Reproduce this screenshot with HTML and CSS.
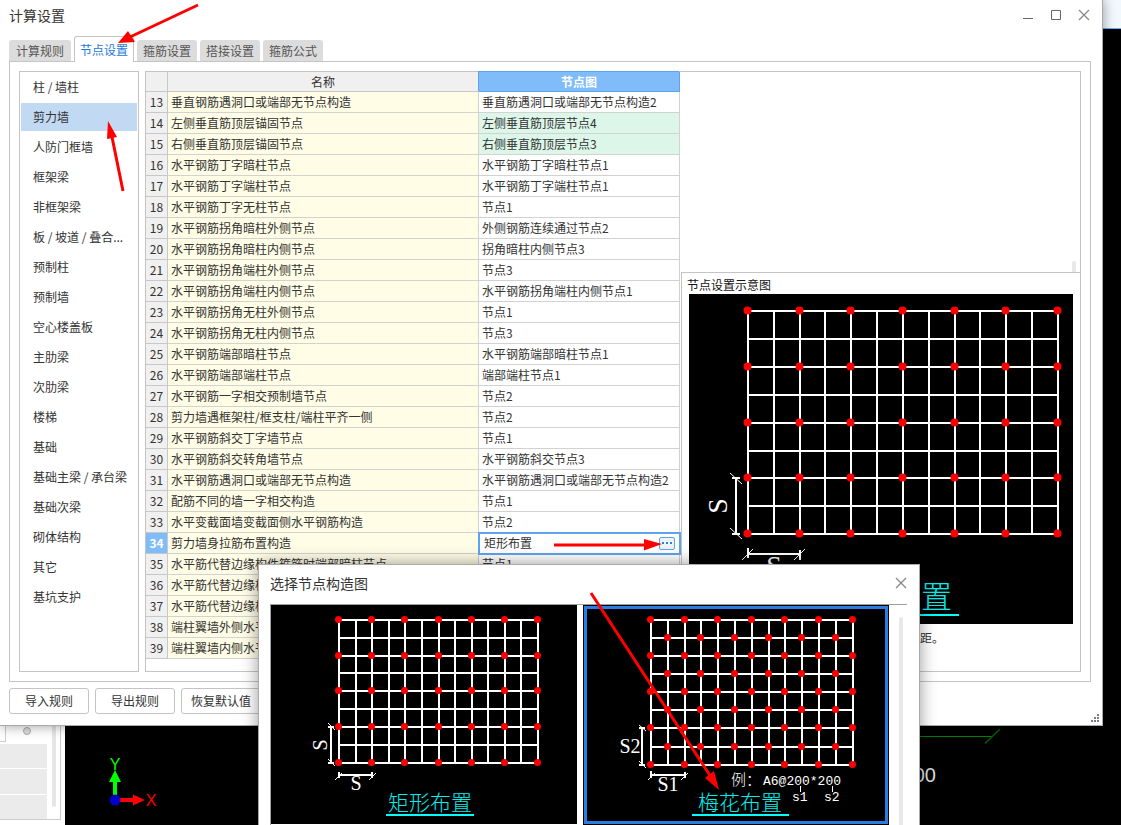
FILE: index.html
```html
<!DOCTYPE html>
<html lang="zh-CN">
<head>
<meta charset="utf-8">
<title>计算设置</title>
<link rel="stylesheet" href="styles.css">
</head>
<body>
<div class="desktop">
  <div class="ribbon"></div>
  <svg class="cad" viewBox="0 0 1121 825" width="1121" height="825" aria-hidden="true">
    <path d="M880 736.5H992" stroke="#008000" fill="none"/>
    <path d="M985 743.500L1000 729" stroke="#006000" stroke-width="1.500" fill="none"/>
    <text x="936" y="782" class="cad-dim">2000</text>
    <path d="M115 796V781" stroke="#0f0" stroke-width="4"/>
    <path d="M115 770L121 782H109Z" fill="#0f0"/>
    <path d="M119 800H134" stroke="#f00" stroke-width="4"/>
    <path d="M145 800L133 794.500V805.500Z" fill="#f00"/>
    <circle cx="115" cy="800" r="5.500" fill="#0000c8"/>
    <text x="115" y="770" class="axis axis-y">Y</text>
    <text x="151" y="806" class="axis axis-x">X</text>
  </svg>
  <div class="dock">
    <div class="dock-frame">
      <div class="dock-rows">
        <div class="dock-head"><span class="dock-box"></span><span class="dock-dot"></span></div>
        <div class="dock-row"></div><div class="dock-row"></div><div class="dock-row"></div>
      </div>
      <div class="dock-scroll"></div>
    </div>
  </div>

  <main class="window">
    <header class="titlebar">
      <h1 class="title">计算设置</h1>
      <div class="controls">
        <button class="control" type="button" aria-label="最小化"><svg width="12" height="12" viewBox="0 0 12 12"><path d="M1 9.500H11" stroke="#666"/></svg></button>
        <button class="control" type="button" aria-label="最大化"><svg width="12" height="12" viewBox="0 0 12 12"><path d="M1.500 1.500H10.500V10.500H1.500Z" stroke="#666" fill="none"/></svg></button>
        <button class="control" type="button" aria-label="关闭"><svg width="12" height="12" viewBox="0 0 12 12"><path d="M1 1L11 11M11 1L1 11" stroke="#888" stroke-width="1.300"/></svg></button>
      </div>
    </header>
    <nav class="tabs" role="tablist">
      <button class="tab" type="button" role="tab">计算规则</button>
      <button class="tab active" type="button" role="tab" aria-selected="true">节点设置</button>
      <button class="tab" type="button" role="tab">箍筋设置</button>
      <button class="tab" type="button" role="tab">搭接设置</button>
      <button class="tab" type="button" role="tab">箍筋公式</button>
    </nav>
    <section class="panel">
      <div class="sidebar">
        <button class="side-item" type="button">柱 / 墙柱</button>
        <button class="side-item selected" type="button">剪力墙</button>
        <button class="side-item" type="button">人防门框墙</button>
        <button class="side-item" type="button">框架梁</button>
        <button class="side-item" type="button">非框架梁</button>
        <button class="side-item" type="button">板 / 坡道 / 叠合...</button>
        <button class="side-item" type="button">预制柱</button>
        <button class="side-item" type="button">预制墙</button>
        <button class="side-item" type="button">空心楼盖板</button>
        <button class="side-item" type="button">主肋梁</button>
        <button class="side-item" type="button">次肋梁</button>
        <button class="side-item" type="button">楼梯</button>
        <button class="side-item" type="button">基础</button>
        <button class="side-item" type="button">基础主梁 / 承台梁</button>
        <button class="side-item" type="button">基础次梁</button>
        <button class="side-item" type="button">砌体结构</button>
        <button class="side-item" type="button">其它</button>
        <button class="side-item" type="button">基坑支护</button>
      </div>
      <div class="content">
        <table class="grid">
          <colgroup><col class="col-num"><col class="col-name"><col class="col-node"></colgroup>
          <thead><tr><th></th><th>名称</th><th class="current">节点图</th></tr></thead>
          <tbody>
            <tr><th>13</th><td>垂直钢筋遇洞口或端部无节点构造</td><td>垂直筋遇洞口或端部无节点构造2</td></tr>
            <tr class="changed"><th>14</th><td>左侧垂直筋顶层锚固节点</td><td>左侧垂直筋顶层节点4</td></tr>
            <tr class="changed"><th>15</th><td>右侧垂直筋顶层锚固节点</td><td>右侧垂直筋顶层节点3</td></tr>
            <tr><th>16</th><td>水平钢筋丁字暗柱节点</td><td>水平钢筋丁字暗柱节点1</td></tr>
            <tr><th>17</th><td>水平钢筋丁字端柱节点</td><td>水平钢筋丁字端柱节点1</td></tr>
            <tr><th>18</th><td>水平钢筋丁字无柱节点</td><td>节点1</td></tr>
            <tr><th>19</th><td>水平钢筋拐角暗柱外侧节点</td><td>外侧钢筋连续通过节点2</td></tr>
            <tr><th>20</th><td>水平钢筋拐角暗柱内侧节点</td><td>拐角暗柱内侧节点3</td></tr>
            <tr><th>21</th><td>水平钢筋拐角端柱外侧节点</td><td>节点3</td></tr>
            <tr><th>22</th><td>水平钢筋拐角端柱内侧节点</td><td>水平钢筋拐角端柱内侧节点1</td></tr>
            <tr><th>23</th><td>水平钢筋拐角无柱外侧节点</td><td>节点1</td></tr>
            <tr><th>24</th><td>水平钢筋拐角无柱内侧节点</td><td>节点3</td></tr>
            <tr><th>25</th><td>水平钢筋端部暗柱节点</td><td>水平钢筋端部暗柱节点1</td></tr>
            <tr><th>26</th><td>水平钢筋端部端柱节点</td><td>端部端柱节点1</td></tr>
            <tr><th>27</th><td>水平钢筋一字相交预制墙节点</td><td>节点2</td></tr>
            <tr><th>28</th><td>剪力墙遇框架柱/框支柱/端柱平齐一侧</td><td>节点2</td></tr>
            <tr><th>29</th><td>水平钢筋斜交丁字墙节点</td><td>节点1</td></tr>
            <tr><th>30</th><td>水平钢筋斜交转角墙节点</td><td>水平钢筋斜交节点3</td></tr>
            <tr><th>31</th><td>水平钢筋遇洞口或端部无节点构造</td><td>水平钢筋遇洞口或端部无节点构造2</td></tr>
            <tr><th>32</th><td>配筋不同的墙一字相交构造</td><td>节点1</td></tr>
            <tr><th>33</th><td>水平变截面墙变截面侧水平钢筋构造</td><td>节点2</td></tr>
            <tr class="editing"><th>34</th><td>剪力墙身拉筋布置构造</td><td><div class="editor"><input class="edit-input" type="text" value="矩形布置" aria-label="剪力墙身拉筋布置构造"><button class="more" type="button" aria-label="选择"><svg width="12" height="4" viewBox="0 0 12 4"><path d="M1 1h2v2h-2zM5 1h2v2h-2zM9 1h2v2h-2z" fill="#2f80de"/></svg></button></div></td></tr>
            <tr><th>35</th><td>水平筋代替边缘构件箍筋时端部暗柱节点</td><td>节点1</td></tr>
            <tr><th>36</th><td>水平筋代替边缘构件</td><td></td></tr>
            <tr><th>37</th><td>水平筋代替边缘构件</td><td></td></tr>
            <tr><th>38</th><td>端柱翼墙外侧水平</td><td></td></tr>
            <tr><th>39</th><td>端柱翼墙内侧水平</td><td></td></tr>
          </tbody>
        </table>
        <div class="detail">
          <div class="detail-top"><span class="thumb"></span></div>
          <div class="preview">
            <h2 class="preview-title">节点设置示意图</h2>
            <svg class="drawing" viewBox="689 294 384 330" width="384" height="330" role="img" aria-label="矩形布置">
              <path class="wire" d="M748 310V535M774 311V534M800 311V534M825 311V534M851 311V534M877 311V534M903 311V534M929 311V534M955 311V534M980 311V534M1006 311V534M1032 311V534M1058 310V535M748 311H1058M748 339H1058M748 367H1058M748 395H1058M748 423H1058M748 451H1058M748 478H1058M748 506H1058M748 534H1058"/>
              <defs><path id="row-a" d="M747.500 0h0M799.500 0h0M850.500 0h0M902.500 0h0M954.500 0h0M1005.500 0h0M1057.500 0h0"/></defs>
              <g class="dots dots-big"><use href="#row-a" y="310.500"/><use href="#row-a" y="366.500"/><use href="#row-a" y="422.500"/><use href="#row-a" y="477.500"/><use href="#row-a" y="533.500"/></g>
              <path class="wire" d="M736 478V534M732 478H740M732 534H740M748 554H800M748 548V558M800 550V560"/>
              <path class="tick" d="M730 473L742 484M730 528L742 539M742 560L753 549M794 560L805 549"/>
              <text class="dim dim-big" transform="translate(727 506) rotate(-90)">S</text>
              <text class="dim dim-big" x="774" y="575">S</text>
              <text class="name name-big" x="890" y="608">矩形布置</text>
              <path class="rule" d="M821 615H959"/>
            </svg>
            <p class="note">距。</p>
          </div>
        </div>
      </div>
    </section>
    <footer class="footer">
      <button class="action" type="button">导入规则</button>
      <button class="action" type="button">导出规则</button>
      <button class="action" type="button">恢复默认值</button>
      <svg class="grip" width="9" height="9" viewBox="0 0 9 9" aria-hidden="true"><path d="M6 0h2v2h-2zM3 3h2v2h-2zM6 3h2v2h-2zM0 6h2v2h-2zM3 6h2v2h-2zM6 6h2v2h-2z" fill="#777b84"/></svg>
    </footer>
  </main>

  <section class="dialog" role="dialog" aria-label="选择节点构造图">
    <header class="dialog-bar">
      <h2 class="dialog-title">选择节点构造图</h2>
      <button class="control" type="button" aria-label="关闭"><svg width="12" height="12" viewBox="0 0 12 12"><path d="M1 1L11 11M11 1L1 11" stroke="#888" stroke-width="1.300"/></svg></button>
    </header>
    <div class="choices">
      <button class="choice" type="button">
        <svg class="drawing" viewBox="271 605 306 219" width="306" height="219" role="img" aria-label="矩形布置">
          <path class="wire" d="M339 619V764M356 620V763M372 620V763M389 620V763M405 620V763M422 620V763M439 620V763M455 620V763M472 620V763M488 620V763M505 620V763M521 620V763M538 619V764M339 620H538M339 638H538M339 656H538M339 673H538M339 691H538M339 709H538M339 727H538M339 745H538M339 763H538"/>
          <defs><path id="row-b" d="M338.500 0h0M371.500 0h0M404.500 0h0M438.500 0h0M471.500 0h0M504.500 0h0M537.500 0h0"/></defs>
          <g class="dots"><use href="#row-b" y="619.500"/><use href="#row-b" y="655.500"/><use href="#row-b" y="690.500"/><use href="#row-b" y="726.500"/><use href="#row-b" y="762.500"/></g>
          <path class="wire" d="M331 727V763M328 727H334M328 763H334M339 775H372M339 772V778M372 772V778"/>
          <path class="tick" d="M328 723L335 730M328 759L335 766M335 780L342 773M369 780L376 773"/>
          <text class="dim" transform="translate(327 745) rotate(-90)">S</text>
          <text class="dim" x="356" y="790">S</text>
          <text class="name" x="430" y="810">矩形布置</text>
          <path class="rule" d="M386 815H474"/>
        </svg>
      </button>
      <button class="choice chosen" type="button">
        <svg class="drawing" viewBox="587 609 298 212" width="298" height="212" role="img" aria-label="梅花布置">
          <path class="wire" d="M651 619V766M668 620V765M685 620V765M701 620V765M718 620V765M735 620V765M752 620V765M769 620V765M785 620V765M802 620V765M819 620V765M836 620V765M853 619V766M651 620H853M651 638H853M651 656H853M651 674H853M651 692H853M651 710H853M651 728H853M651 747H853M651 765H853"/>
          <defs>
            <path id="row-c" d="M650.500 0h0M684.500 0h0M717.500 0h0M751.500 0h0M784.500 0h0M818.500 0h0M852.500 0h0"/>
            <path id="row-d" d="M667.500 0h0M700.500 0h0M734.500 0h0M768.500 0h0M801.500 0h0M835.500 0h0"/>
          </defs>
          <g class="dots"><use href="#row-c" y="619.500"/><use href="#row-d" y="637.500"/><use href="#row-c" y="655.500"/><use href="#row-d" y="673.500"/><use href="#row-c" y="691.500"/><use href="#row-d" y="709.500"/><use href="#row-c" y="727.500"/><use href="#row-d" y="746.500"/><use href="#row-c" y="764.500"/></g>
          <path class="wire" d="M642 728V765M639 728H645M639 765H645M651 775H685M651 771V778M685 772V778"/>
          <path class="tick" d="M639 725L646 731M639 761L646 768M648 780L655 773M681 780L688 773M800.500 786V792M832.500 786V792"/>
          <text class="dim" x="630" y="753">S2</text>
          <text class="dim" x="668" y="791">S1</text>
          <text class="sample-cjk" x="731" y="785">例：</text>
          <text class="sample" x="763" y="785">A6@200*200</text>
          <text class="sample" x="792" y="801">s1</text>
          <text class="sample" x="824" y="801">s2</text>
          <text class="name" x="740" y="810">梅花布置</text>
          <path class="rule" d="M692 815H789"/>
        </svg>
      </button>
      <span class="choice-scroll"></span>
    </div>
  </section>

  <svg class="arrows" viewBox="0 0 1121 825" width="1121" height="825" aria-hidden="true">
    <path d="M198 5L130 37M123 191L112 137M554 545H646M591 593L711 777" stroke="#f00" stroke-width="3" fill="none"/>
    <path d="M118 43L128 31L135 42ZM108 121L107 139L117 137ZM662 544L644 539V550.500ZM719 790L705 778L714 771Z" fill="#f00"/>
  </svg>
</div>
</body>
</html>
```
FILE: styles.css
```css
* { box-sizing: border-box; }
body {
  margin: 0;
  font: 12px/20px "Noto Sans CJK SC", "Noto Sans", sans-serif;
  color: #333;
  background: #000;
}
h1, h2, p { margin: 0; font-weight: 400; }
button, input { font: inherit; color: inherit; margin: 0; padding: 0; border: 0; background: none; }
svg { display: block; }

.desktop { position: relative; height: 100vh; overflow: hidden; background: #000; }
.ribbon { height: 29px; background: #f1f8fe; border-bottom: 1px solid #6bb0f5; }
.cad, .arrows { position: absolute; top: 0; left: 0; }
.arrows { pointer-events: none; }
.cad-dim { font: 20px "Liberation Sans", sans-serif; fill: #ddd; text-anchor: end; }
.axis { font: 16px "Liberation Sans", sans-serif; text-anchor: middle; }
.axis-y { fill: #0f0; }
.axis-x { fill: #f00; }

/* docked panel behind the window */
.dock { position: absolute; left: 0; bottom: 0; width: 65px; height: 110px; background: #fff; }
.dock-frame { display: flex; justify-content: space-between; height: 105px; padding-right: 4px; border-right: 1px solid #ccc; border-bottom: 1px solid #ccc; width: 61px; }
.dock-rows { display: flex; flex-direction: column; gap: 1px; width: 47px; }
.dock-head { display: flex; align-items: flex-start; justify-content: space-between; height: 28px; padding-right: 16px; }
.dock-box { width: 6px; height: 27px; border: solid #ccc; border-width: 0 1px 1px 0; }
.dock-dot { width: 8px; height: 8px; margin-top: 12px; border: 1px solid #aaa; border-radius: 50%; background: #ddd; }
.dock-row { flex: 1; background: #ebebeb; }
.dock-scroll { width: 4px; height: 92px; border-radius: 2px; background: #e6e6e6; }

/* settings window */
.window {
  position: absolute; top: 0; left: 0; right: 18px;
  background: #fff; border: solid #aaa; border-width: 0 1px 1px 0;
  box-shadow: 0 0 12px rgba(0, 0, 0, .4);
}
.titlebar { display: flex; justify-content: space-between; height: 36px; padding: 5px 12px 0 9px; }
.title { font-size: 14px; line-height: 20px; }
.controls { display: flex; align-items: flex-start; gap: 16px; padding-top: 4px; }
.control { width: 12px; height: 12px; }
.tabs { position: relative; display: flex; align-items: flex-end; gap: 3px; height: 26px; margin-bottom: -1px; padding-left: 9px; }
.tab { width: 60px; height: 21px; margin-bottom: 1px; border-radius: 3px 3px 0 0; background: #dcdcdc; color: #555; }
.tab:first-child { width: 62px; }
.tab.active { height: 26px; margin-bottom: 0; border: 1px solid #c4c4c6; border-bottom: 0; background: #fff; color: #1a78e0; }
.panel { display: flex; gap: 6px; margin: 0 11px 0 9px; padding: 9px; border: 1px solid #c4c4c6; }
.sidebar { display: flex; flex-direction: column; gap: 2px; flex: none; width: 120px; padding: 1px; border: 1px solid #c4c4c6; }
.side-item { height: 28px; padding-left: 12px; text-align: left; white-space: nowrap; }
.side-item.selected { background: #c1d9f2; }
.content { display: flex; flex: 1; min-width: 0; border: 1px solid #c4c4c6; padding-bottom: 12px; }

.grid { flex: none; width: 534px; table-layout: fixed; border-collapse: separate; border-spacing: 0; }
.col-num { width: 22px; }
.col-name { width: 311px; }
.grid th, .grid td { height: 21px; padding: 0 3px; border: solid #c8c8c8; border-width: 0 1px 1px 0; line-height: 20px; font-weight: 400; white-space: nowrap; overflow: hidden; }
.grid th { padding: 0; background: #f0f0f0; text-align: center; }
.grid thead th { height: 20px; line-height: 19px; }
.grid thead .current { background: #80bbfa; border-color: #5ea4ec; color: #fff; font-weight: 700; box-shadow: -1px -1px #5ea4ec; }
.grid td:nth-child(2) { background: #fffde6; }
.grid td { border-color: #d2d2d2; }
.grid .changed td:last-child { background: #ddf6ea; }
.grid .editing th { background: #80bbfa; color: #fff; font-weight: 700; }
.grid .editing td:last-child { padding: 0; outline: 2px solid #5ea4ec; outline-offset: -1px; }
.editor { display: flex; align-items: center; padding: 0 4px 0 5px; height: 20px; }
.edit-input { flex: 1; min-width: 0; height: 18px; outline: 0; }
.more { display: flex; align-items: center; justify-content: center; width: 16px; height: 13px; border: 1px solid #5ea4ec; border-radius: 2px; background: #eef3fa; }

.detail { display: flex; flex-direction: column; flex: 1; min-width: 0; margin: 0 0 -12px 1px; }
.detail-top { display: flex; justify-content: flex-end; align-items: flex-end; height: 200px; padding-right: 4px; }
.thumb { width: 4px; height: 11px; border-radius: 2px 2px 0 0; background: #e8e8e8; }
.preview { flex: 1; padding: 3px 7px 0; border: solid #c4c4c6; border-width: 1px 0 0 1px; }
.preview-title { margin-left: -2px; height: 18px; font-size: 12px; line-height: 18px; color: #111; }
.note { padding-left: 231px; line-height: 28px; }

.footer { display: flex; gap: 6px; padding: 6px 9px 11px; }
.action { width: 80px; height: 26px; border: 1px solid #c4c4c6; border-radius: 3px; background: #fff; }
.grip { align-self: flex-end; margin: 0 -7px -9px auto; }

/* drawings */
.drawing { background: #000; }
.wire { stroke: #fff; stroke-width: 2; fill: none; }
.tick { stroke: #fff; stroke-width: 1; fill: none; }
.dots { stroke: #f00; stroke-width: 7; stroke-linecap: round; fill: none; }
.dots-big { stroke-width: 8; }
.dim { font: 20px "Liberation Serif", serif; fill: #fff; text-anchor: middle; }
.dim-big { font-size: 28px; }
.name { font: 300 21px "Liberation Sans", "Noto Sans CJK SC", sans-serif; fill: #00f0f0; text-anchor: middle; }
.name-big { font-size: 31px; }
.rule { stroke: #0ff; stroke-width: 2; }
.sample { font: 13px "Liberation Mono", monospace; fill: #fff; }
.sample-cjk { font: 300 15px "Liberation Sans", "Noto Sans CJK SC", sans-serif; fill: #fff; }

/* picker dialog */
.dialog {
  position: absolute; top: 564px; left: 258px; width: 662px; bottom: -24px;
  padding: 0 12px 0 11px; border: 1px solid #aaa; background: #fff;
  box-shadow: 0 0 16px rgba(0, 0, 0, .4);
}
.dialog-bar { display: flex; align-items: center; justify-content: space-between; height: 39px; padding-bottom: 3px; }
.dialog-title { font-size: 14px; }
.choices { display: flex; align-items: flex-start; gap: 6px; height: 100%; border: solid #a0a0a0; border-width: 1px 0 0 1px; }
.choice { flex: none; background: #000; }
.choice.chosen { border: 1px solid #000; outline: 3px solid #2a7de1; outline-offset: -4px; padding: 3px; }
.choice-scroll { width: 4px; height: 100%; margin: 12px 0 0 4px; border-radius: 2px; background: #e8e8e8; }
```
